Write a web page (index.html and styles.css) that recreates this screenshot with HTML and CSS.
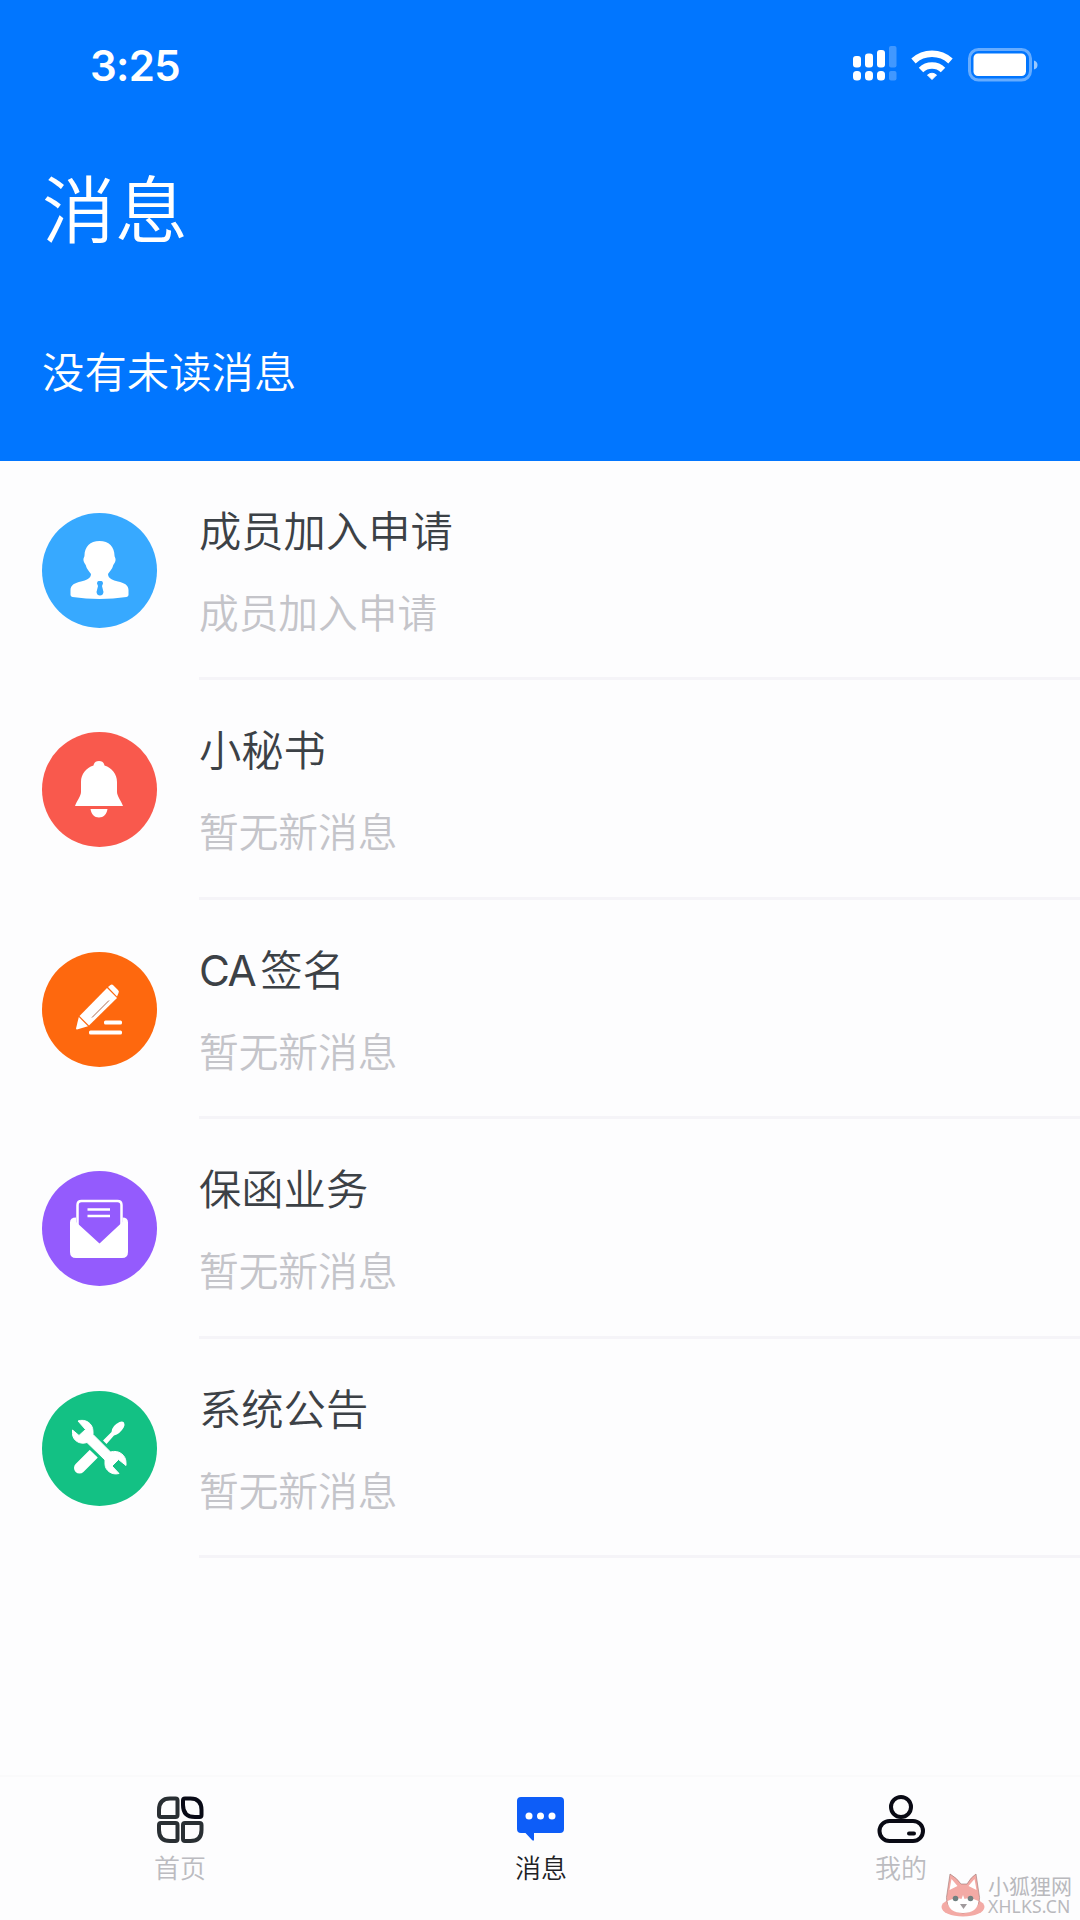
FILE: index.html
```html
<!DOCTYPE html>
<html lang="zh-CN">
<head>
<meta charset="utf-8">
<title>消息</title>
<link rel="stylesheet" href="styles.css">
</head>
<body>
<div class="screen">
  <header class="header">
    <div class="status">
      <span class="time">3:25</span>
      <svg class="signals" width="190" height="40" viewBox="0 0 190 40">
        <g fill="#fff">
          <rect x="1" y="11" width="8" height="11.500" rx="3"/><rect x="1" y="26" width="8" height="9.500" rx="3.500"/>
          <rect x="13" y="8.500" width="8" height="14" rx="3"/><rect x="13" y="26" width="8" height="9.500" rx="3.500"/>
          <rect x="25" y="5" width="8" height="17.500" rx="3"/><rect x="25" y="26" width="8" height="9.500" rx="3.500"/>
          <g opacity=".25"><rect x="37" y="1" width="7.500" height="21.500" rx="2"/><rect x="37" y="26" width="7.500" height="9.500" rx="2"/></g>
          <path d="M80 34.500l-4.500-4.500q4.500-3.500 9 0z" stroke="#fff" stroke-linejoin="round"/>
        </g>
        <g fill="none" stroke="#fff" stroke-width="6.500">
          <path d="M61.500 16a27.500 27.500 0 0 1 37 0"/>
          <path d="M69 25a16 16 0 0 1 22 0"/>
        </g>
        <rect x="117.500" y="4.500" width="61" height="30.500" rx="9" fill="none" stroke="#fff" stroke-width="3" opacity=".4"/>
        <rect x="121.500" y="8.500" width="52.500" height="22.500" rx="4.500" fill="#fff"/>
        <path d="M182 15.500q3.500 1 3.500 4.500t-3.500 4.500z" fill="#fff" opacity=".6"/>
      </svg>
    </div>
    <h1 class="heading">消息</h1>
    <p class="summary">没有未读消息</p>
  </header>

  <main class="list">
    <section class="row">
      <svg class="avatar" viewBox="0 0 115 115">
        <circle cx="57.500" cy="57.500" r="57.500" fill="#37a9ff"/>
        <path fill="#fff" d="M57.500 28c9.500 0 15 6 15 14.500 0 2 1.500 2.500 1 5-.5 2.400-1.300 3-2.200 4.500-1.200 4.500-3.300 6-5.300 9 0 4.500 5 6.500 10 7.500 6 1.300 10.500 3.500 10.500 8.500v5q0 1.500-2 2Q71 86 57.500 86T30.500 84q-2-.5-2-2v-5c0-5 4.500-7.200 10.500-8.500 5-1 10-3 10-7.500-2-3-4.100-4.500-5.300-9-.9-1.500-1.700-2.100-2.200-4.500-.5-2.500 1-3 1-5C42.500 34 48 28 57.500 28z"/>
        <path fill="#37a9ff" d="M56.500 68h3q1.500 0 1.500 2.500l-1 2.500 1.500 6q-.5 3.500-3.500 3.500t-3.500-3.500l1.500-6-1-2.500q0-2.500 1.500-2.500z"/>
      </svg>
      <div class="text"><h2 class="title">成员加入申请</h2><p class="note">成员加入申请</p></div>
    </section>
    <section class="row">
      <svg class="avatar" viewBox="0 0 115 115">
        <circle cx="57.500" cy="57.500" r="57.500" fill="#f9594d"/>
        <path fill="#fff" d="M57 29c3.500 0 5 2 5.500 4.500C70 36 75 42 75 50v10c0 4 4 8.500 6 14H33C35 68.500 39 64 39 60V50c0-8 5-14 12.500-16.500C52 31 53.500 29 57 29zM48.500 77h17c-.7 5-4 8.500-8.500 8.500S49.200 82 48.500 77z"/>
      </svg>
      <div class="text"><h2 class="title">小秘书</h2><p class="note">暂无新消息</p></div>
    </section>
    <section class="row">
      <svg class="avatar" viewBox="0 0 115 115">
        <circle cx="57.500" cy="57.500" r="57.500" fill="#fe680e"/>
        <g fill="#fff">
          <path d="M65 36L75 46 47 73.500 37.500 64z"/>
          <path d="M66 35l2.500-2q1.500-1 3 .5l4.500 4.500q1.500 1.500 .5 3l-1.500 3.500z"/>
          <path d="M36.800 65l9.200 9.200-11 3.300q-1 0-1-1z"/>
          <rect x="62" y="68.500" width="18" height="4" rx="1.500"/>
          <rect x="47" y="78.500" width="33" height="4" rx="1.500"/>
        </g>
        <path d="M50 65.500l17-17" stroke="#a65a3a" stroke-width=".9" fill="none"/>
      </svg>
      <div class="text"><h2 class="title"><span class="latin">CA</span>签名</h2><p class="note">暂无新消息</p></div>
    </section>
    <section class="row">
      <svg class="avatar" viewBox="0 0 115 115">
        <circle cx="57.500" cy="57.500" r="57.500" fill="#945bfd"/>
        <path d="M35.500 54V34q0-4 4-4h36q4 0 4 4v20" fill="none" stroke="#fff" stroke-width="2.500"/>
        <path fill="#fff" d="M34 46.500v4.500l23.500 21.500L80.500 51v-4.500q5.500 0 5.500 5V81q0 6-6 6H34q-6 0-6-6V51.500q0-5 6-5z"/>
        <path d="M45.500 38.500h22.500M45.500 45h22.500" stroke="#fff" stroke-width="2.500"/>
      </svg>
      <div class="text"><h2 class="title">保函业务</h2><p class="note">暂无新消息</p></div>
    </section>
    <section class="row">
      <svg class="avatar" viewBox="0 0 115 115">
        <circle cx="57.500" cy="57.500" r="57.500" fill="#13c184"/>
        <path d="M37.500 77L51.500 63" stroke="#fff" stroke-width="11" stroke-linecap="round"/>
        <path fill="#fff" d="M61 49.500l8.500-8.500q.5-6.500 8-10 3-1 4.500.5 1.200 2-.3 5Q78 43 72 44.500L64.500 53z"/>
        <path d="M43 44L71.500 71" stroke="#13c184" stroke-width="15"/>
        <path fill="#fff" stroke="#fff" stroke-linejoin="round" d="M36 30c7-2.500 15 2 15 10.500v3l17.500 17.500c8-2.500 15.500 3 15.500 10.500v3l-7.500-6-6.500 6.500 7 7.500c-7 2-14-3-14-9.500v-4L45 51.500c-7 2.500-14.500-2-14.500-9v-3.500l6.500 5.500 6.500-6z"/>
      </svg>
      <div class="text"><h2 class="title">系统公告</h2><p class="note">暂无新消息</p></div>
    </section>
  </main>

  <nav class="tabs">
    <div class="tab">
      <svg width="52" height="52" viewBox="0 0 52 52" fill="none" stroke="#292f33" stroke-width="4">
        <path d="M16 4.500h5.500q2 0 2 2v14.500q0 2-2 2H7q-2 0-2-2V16Q5 4.500 16 4.500z"/>
        <path stroke="#080a16" d="M36.500 4.500H31q-2 0-2 2V11q0 12 12 12h4.500q2 0 2-2V16q0-11.500-11-11.500z"/>
        <path d="M16 47h5.500q2 0 2-2V31q0-2-2-2H7q-2 0-2 2v5q0 11 11 11z"/>
        <path d="M36.500 47H31q-2 0-2-2V31q0-2 2-2h14.500q2 0 2 2v5q0 11-11 11z"/>
      </svg>
      <span class="label">首页</span>
    </div>
    <div class="tab active">
      <svg width="52" height="52" viewBox="0 0 52 52">
        <path fill="#0d5df8" d="M8 3h38q4 0 4 4v28q0 4-4 4H20v6.500q0 2-2 .5L11.500 39H7q-4 0-4-4V7q0-4 4-4z"/>
        <g fill="#fff"><circle cx="15" cy="22" r="3.500"/><circle cx="26.500" cy="22" r="3.500"/><circle cx="38" cy="22" r="3.500"/></g>
      </svg>
      <span class="label">消息</span>
    </div>
    <div class="tab">
      <svg width="52" height="52" viewBox="0 0 52 52" fill="none" stroke="#090a14" stroke-width="4">
        <circle cx="27" cy="13" r="10"/>
        <rect x="5.500" y="27" width="43.500" height="20" rx="10"/>
        <path d="M35 39.500h5" stroke-linecap="round"/>
      </svg>
      <span class="label">我的</span>
    </div>
  </nav>

  <div class="watermark">
    <svg width="44" height="44" viewBox="0 0 44 44">
      <ellipse cx="22" cy="34" rx="21.500" ry="9.500" fill="#f3aaa5"/>
      <path d="M6 21L9 1q7 4 11 10h6Q30 4 35 1l3 20q2 7-3 13-6 6-13 6T9 34Q4 28 6 21z" fill="#f3aaa5" stroke="#9c7774" stroke-width=".6"/>
      <path d="M8.500 17L10.500 6l6 7zM35.500 17L33.500 6l-6 7z" fill="#fff"/>
      <path d="M6.500 28q8-4 14-2l1.500-4 1.500 4q6-2 14 2-1 12-15.500 12T6.500 28z" fill="#fff"/>
      <circle cx="14.500" cy="25.500" r="2.800" fill="#708080"/><circle cx="29.500" cy="25.500" r="2.800" fill="#708080"/>
      <path d="M19 31h7l-3.500 5z" fill="#a09a9c"/>
    </svg>
    <div class="brand"><span class="brand-name">小狐狸网</span><span class="brand-site">XHLKS.CN</span></div>
  </div>
</div>
</body>
</html>
```
FILE: styles.css
```css
* { box-sizing: border-box; margin: 0; padding: 0; }
body {
  background: #fdfdfe;
  font-family: Inter, "Noto Sans CJK SC", sans-serif;
}
.screen {
  position: relative;
  display: flex;
  flex-direction: column;
  width: 1080px;
  height: 1920px;
  overflow: hidden;
}
.header {
  height: 461px;
  padding: 0 42px;
  background: #0176ff;
  color: #fff;
}
.status {
  display: flex;
  align-items: center;
  justify-content: space-between;
  height: 130px;
  padding-left: 48px;
}
.time { font-size: 42px; font-weight: 600; letter-spacing: -0.700px; }
.signals { margin-right: -4px; }
.heading {
  font-size: 73px;
  font-weight: 350;
  line-height: 104px;
  margin-top: 29px;
}
.summary {
  font-size: 42.400px;
  font-weight: 350;
  line-height: 60px;
  margin-top: 80px;
}
.list { display: flex; flex-direction: column; }
.row {
  display: flex;
  gap: 42px;
  height: 219.400px;
  padding-left: 42px;
}
.avatar { width: 115px; height: 115px; margin-top: 52px; flex: none; }
.text {
  flex: 1;
  padding-top: 41px;
  border-bottom: 3px solid #f5f4f8;
}
.title {
  color: #3c4146;
  font-size: 42.300px;
  font-weight: 350;
  line-height: 60px;
}
.latin { margin-right: 5px; letter-spacing: -1.500px; font-weight: 400; }
.note {
  color: #c4c4c9;
  font-size: 39.700px;
  font-weight: 350;
  line-height: 58px;
  margin-top: 23px;
}
.tabs {
  display: flex;
  height: 145px;
  margin-top: auto;
  border-top: 2px solid #fafafb;
}
.tab {
  flex: 1;
  display: flex;
  flex-direction: column;
  align-items: center;
  padding-top: 17px;
  color: #bbbbc0;
}
.label { font-size: 26px; font-weight: 350; line-height: 38px; margin-top: 4px; }
.tab:not(:first-child) .label { padding-left: 2px; }
.active { color: #202124; }
.watermark {
  position: absolute;
  right: 8px;
  bottom: 3px;
  display: flex;
  align-items: center;
  gap: 3px;
  color: #b9b9bd;
}
.brand { display: flex; flex-direction: column; gap: 1px; }
.brand-name { font-family: "Noto Sans CJK SC", sans-serif; font-size: 21px; line-height: 21px; }
.brand-site { font-family: "Noto Sans", sans-serif; font-size: 17.500px; line-height: 18px; letter-spacing: 0.200px; }
```
